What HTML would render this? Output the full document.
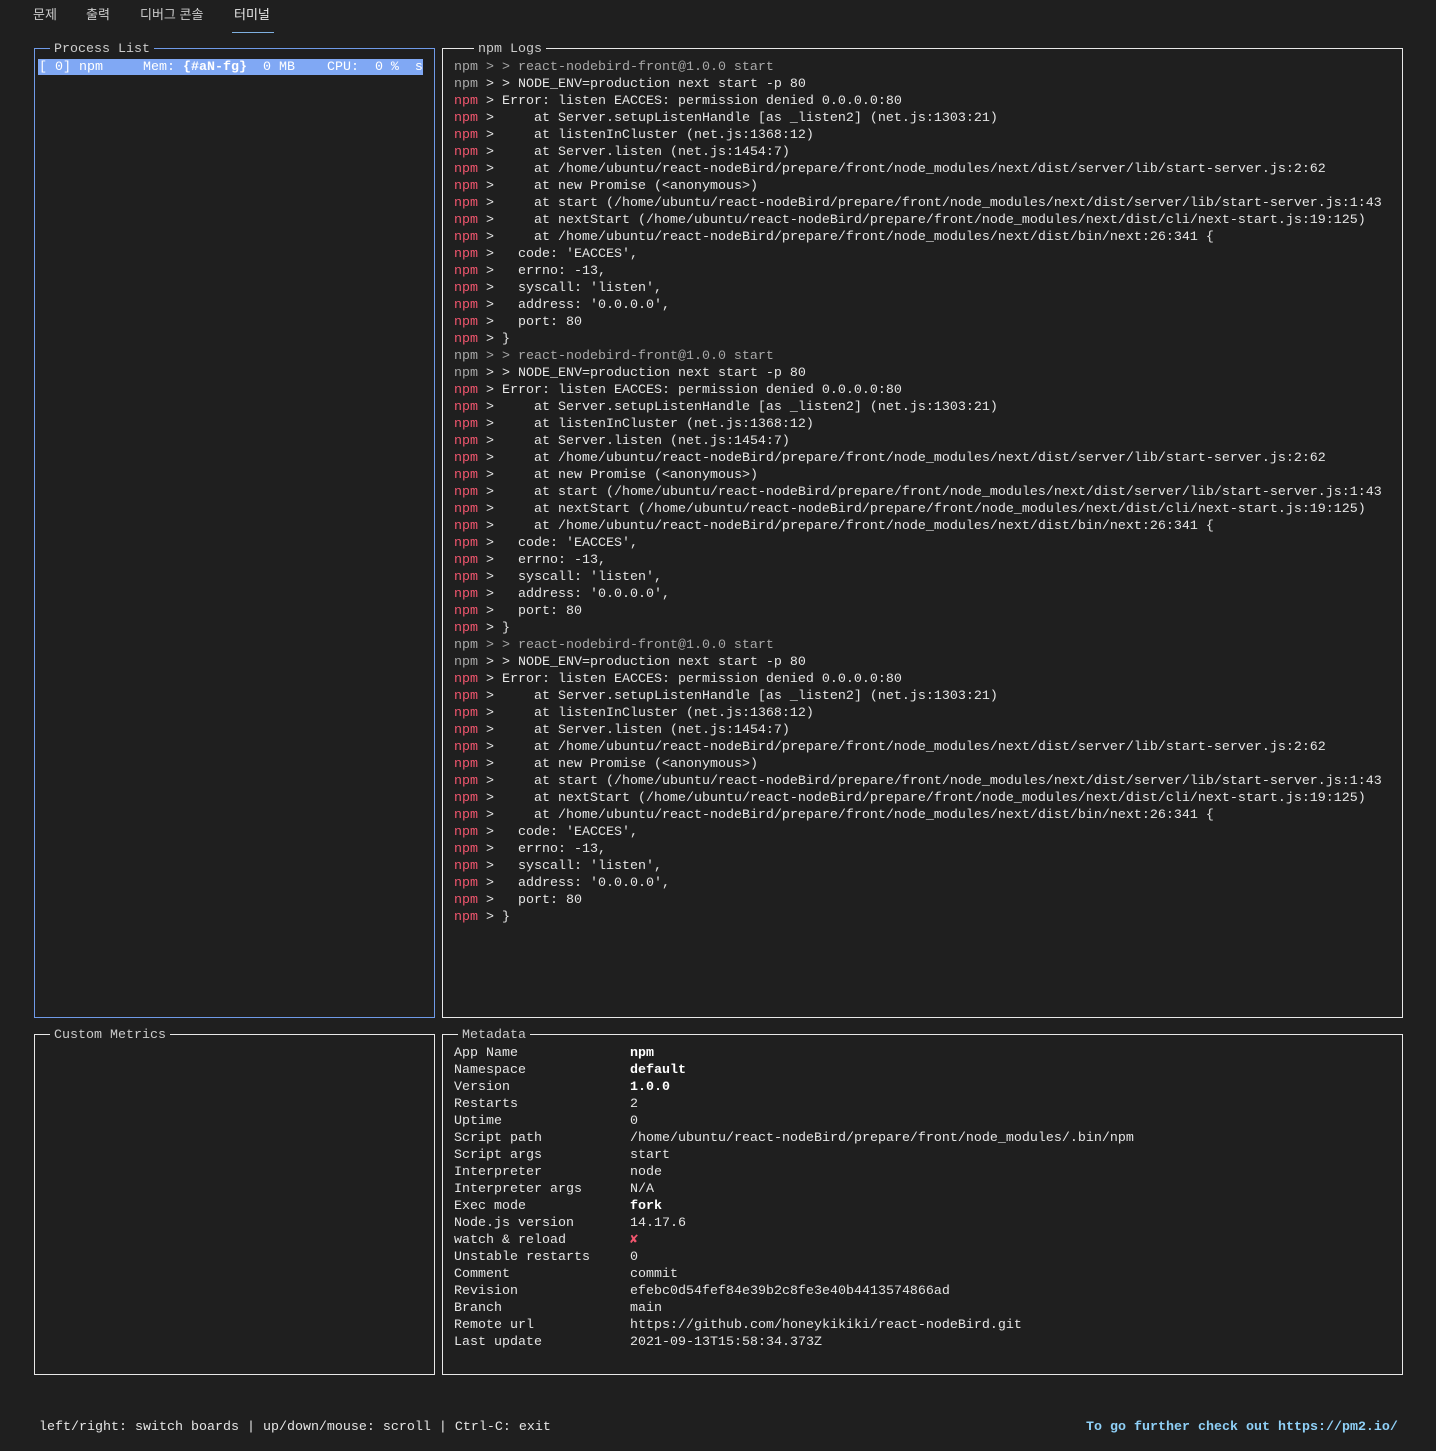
<!DOCTYPE html>
<html><head><meta charset="utf-8"><style>
html,body{margin:0;padding:0;background:#1f1f1f;width:1436px;height:1451px;overflow:hidden}
body{position:relative;font-family:"Liberation Mono","Noto Sans CJK KR",monospace;font-size:13.33px;color:#e6e6e6}
.tab{position:absolute;top:4px;font-family:"Liberation Sans","Noto Sans CJK KR",sans-serif;font-size:13px;color:#cccccc}
.box{position:absolute;border:1px solid #e8e8e8;box-sizing:border-box}
.ttl{position:absolute;top:-8px;background:#1f1f1f;padding:0 4px;color:#cccccc;line-height:17px;white-space:pre}
pre{margin:0;font:inherit;line-height:17px;position:absolute;white-space:pre}
.r{color:#f1566e}.g{color:#a8a8a8}.b{font-weight:bold;color:#fff}
</style></head><body>
<div class="tab" style="left:33px">문제</div>
<div class="tab" style="left:86px">출력</div>
<div class="tab" style="left:140px">디버그 콘솔</div>
<div class="tab" style="left:234px;color:#e8e8e8">터미널</div>
<div style="position:absolute;left:232px;top:32px;width:42px;height:1px;background:#7fb0e0"></div>

<div class="box" style="left:34px;top:48px;width:401px;height:970px;border-color:#6f9ae8">
<div class="ttl" style="left:15px">Process List</div>
<div style="position:absolute;left:3px;top:10px;width:385px;height:16px;background:#80a8f4"></div>
<pre style="left:4px;top:10px;color:#fff">[ 0] npm     Mem: <b>{#aN-fg}</b>  0 MB    CPU:  0 %  s</pre>
</div>

<div class="box" style="left:442px;top:48px;width:961px;height:970px">
<div class="ttl" style="left:31px">npm Logs</div>
<pre style="left:11px;top:10px" id="log"></pre>
</div>

<div class="box" style="left:34px;top:1034px;width:401px;height:341px">
<div class="ttl" style="left:15px">Custom Metrics</div>
</div>

<div class="box" style="left:442px;top:1034px;width:961px;height:341px">
<div class="ttl" style="left:15px">Metadata</div>
<pre style="left:11px;top:10px">App Name
Namespace
Version
Restarts
Uptime
Script path
Script args
Interpreter
Interpreter args
Exec mode
Node.js version
watch &amp; reload
Unstable restarts
Comment
Revision
Branch
Remote url
Last update</pre>
<pre style="left:187px;top:10px"><span class="b">npm</span>
<span class="b">default</span>
<span class="b">1.0.0</span>
2
0
/home/ubuntu/react-nodeBird/prepare/front/node_modules/.bin/npm
start
node
N/A
<span class="b">fork</span>
14.17.6
<span class="r" style="font-weight:bold">✘</span>
0
commit
efebc0d54fef84e39b2c8fe3e40b4413574866ad
main
https://github.com/honeykikiki/react-nodeBird.git
2021-09-13T15:58:34.373Z</pre>
</div>

<pre style="left:39px;top:1419px">left/right: switch boards | up/down/mouse: scroll | Ctrl-C: exit</pre>
<pre style="left:1086px;top:1419px;color:#8fd0f7;font-weight:bold">To go further check out https://pm2.io/</pre>

<script>
var blk='<span class="g">npm &gt; &gt; react-nodebird-front@1.0.0 start</span>\n'+
'<span class="g">npm</span> &gt; &gt; NODE_ENV=production next start -p 80\n';
var red=["&gt; Error: listen EACCES: permission denied 0.0.0.0:80",
"&gt;     at Server.setupListenHandle [as _listen2] (net.js:1303:21)",
"&gt;     at listenInCluster (net.js:1368:12)",
"&gt;     at Server.listen (net.js:1454:7)",
"&gt;     at /home/ubuntu/react-nodeBird/prepare/front/node_modules/next/dist/server/lib/start-server.js:2:62",
"&gt;     at new Promise (&lt;anonymous&gt;)",
"&gt;     at start (/home/ubuntu/react-nodeBird/prepare/front/node_modules/next/dist/server/lib/start-server.js:1:43",
"&gt;     at nextStart (/home/ubuntu/react-nodeBird/prepare/front/node_modules/next/dist/cli/next-start.js:19:125)",
"&gt;     at /home/ubuntu/react-nodeBird/prepare/front/node_modules/next/dist/bin/next:26:341 {",
"&gt;   code: 'EACCES',","&gt;   errno: -13,","&gt;   syscall: 'listen',","&gt;   address: '0.0.0.0',","&gt;   port: 80","&gt; }"];
var s='';for(var i=0;i<3;i++){s+=blk;red.forEach(function(l){s+='<span class="r">npm</span> '+l+'\n';});}
document.getElementById('log').innerHTML=s;
</script>
</body></html>
